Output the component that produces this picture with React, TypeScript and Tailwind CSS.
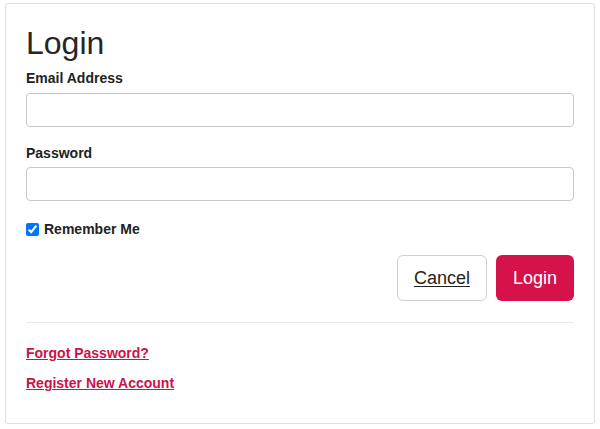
export default function App() {
  return (
    <div className="min-h-screen bg-white font-['Liberation_Sans',Arial,sans-serif] text-[#222]">
      <div className="ml-[5px] pt-[3px]">
        <div className="w-[590px] h-[421px] border border-[#dedede] rounded-[3px] bg-white px-5 pt-5">
          <h1 className="text-[32px] leading-[38px] font-normal text-[#262626] mb-[6px]">Login</h1>

          <form onSubmit={(e) => e.preventDefault()}>
            <div className="mb-4">
              <label className="block text-[14px] leading-5 font-bold mb-[5px]">Email Address</label>
              <input
                type="email"
                className="block w-full h-[34px] border border-[#c8c8c8] rounded-[4px] bg-white px-3 text-[14px] outline-none"
              />
            </div>

            <div className="mb-[18px]">
              <label className="block text-[14px] leading-5 font-bold mb-[4px]">Password</label>
              <input
                type="password"
                className="block w-full h-[34px] border border-[#c8c8c8] rounded-[4px] bg-white px-3 text-[14px] outline-none"
              />
            </div>

            <label className="flex items-center gap-[5px] text-[14px] leading-5 font-bold">
              <input type="checkbox" defaultChecked className="m-0 w-[13px] h-[13px]" />
              Remember Me
            </label>

            <div className="flex justify-end gap-[9px] mt-4">
              <button
                type="button"
                className="h-[46px] px-4 border border-[#d0d0d0] rounded-[6px] bg-white text-[18px] text-[#222] underline underline-offset-2"
              >
                Cancel
              </button>
              <button
                type="submit"
                className="h-[46px] px-[17px] rounded-[6px] bg-[#d6124a] text-[18px] text-white"
              >
                Login
              </button>
            </div>
          </form>

          <hr className="mt-[21px] mb-5 border-0 border-t border-[#ececec]" />

          <div className="flex flex-col gap-[10px] text-[14px] leading-5 font-bold">
            <a href="#" className="text-[#cc1249] underline self-start">Forgot Password?</a>
            <a href="#" className="text-[#cc1249] underline self-start">Register New Account</a>
          </div>
        </div>
      </div>
    </div>
  );
}
